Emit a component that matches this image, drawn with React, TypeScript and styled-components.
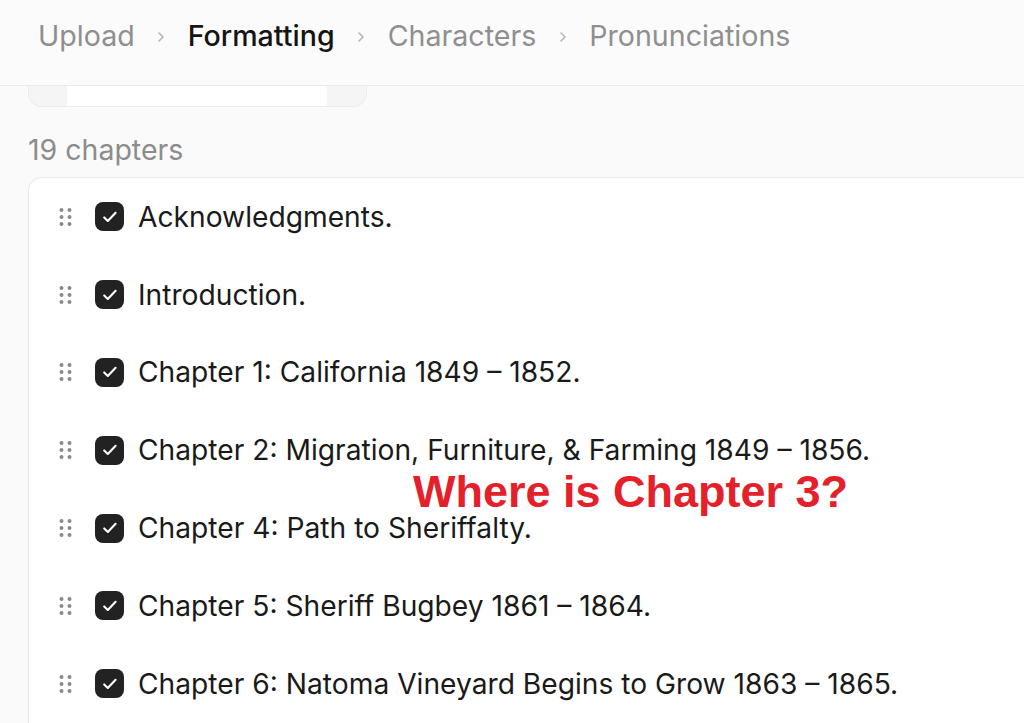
import React from "react";
import styled, { createGlobalStyle } from "styled-components";

const Global = createGlobalStyle`
  html, body { margin: 0; padding: 0; background: #fafafa; }
  body { font-family: Inter, "Noto Sans", sans-serif; color: #1c1c1c; overflow: hidden; }
  * { box-sizing: border-box; }
`;

const Page = styled.div`
  position: relative;
  width: 1024px;
  height: 723px;
  overflow: hidden;
  background: #fafafa;
`;

const Header = styled.header`
  height: 86px;
  display: flex;
  align-items: center;
  gap: 21.5px;
  padding: 0 0 12px 38px;
  border-bottom: 1px solid #ebebeb;
  background: #fbfbfb;
`;

const Crumb = styled.span<{ $active?: boolean }>`
  font-size: 28.6px;
  font-weight: ${(p) => (p.$active ? 500 : 400)};
  color: ${(p) => (p.$active ? "#141414" : "#8f8f8f")};
  line-height: 1;
`;

const Chevron = styled.svg`
  width: 10px;
  height: 14px;
  flex: none;
`;

const Content = styled.main`
  padding: 0 0 0 28px;
`;

const ScrolledBox = styled.div`
  width: 339px;
  height: 21px;
  display: grid;
  grid-template-columns: 38px 1fr 39px;
  border: 1px solid #ececec;
  border-top: none;
  border-radius: 0 0 14px 14px;
  overflow: hidden;
  background: #f5f5f5;
`;

const ScrolledCenter = styled.div`
  grid-column: 2;
  background: #ffffff;
`;

const Count = styled.div`
  margin-top: 27px;
  font-size: 28.5px;
  color: #8c8c8c;
  line-height: 32px;
`;

const Card = styled.section`
  margin-top: 11px;
  background: #ffffff;
  border: 1px solid #e9e9e9;
  border-right: none;
  border-radius: 14px 0 0 0;
  min-height: 600px;
`;

const Row = styled.div`
  height: 77.8px;
  display: flex;
  align-items: center;
  padding-left: 29px;
`;

const Handle = styled.svg`
  width: 16px;
  height: 22px;
  flex: none;
`;

const Check = styled.span`
  width: 29px;
  height: 29px;
  margin-left: 21px;
  border-radius: 8px;
  background: #222222;
  display: flex;
  align-items: center;
  justify-content: center;
  flex: none;
`;

const Title = styled.span`
  margin-left: 14px;
  font-size: 28.2px;
  color: #1a1a1a;
  white-space: nowrap;
  line-height: 1;
`;

const Note = styled.div`
  position: absolute;
  left: 413px;
  top: 469px;
  font-family: "Liberation Sans", Arial, sans-serif;
  font-weight: 700;
  font-size: 45px;
  color: #e4202a;
  white-space: nowrap;
  line-height: 1;
`;

const chapters = [
  "Acknowledgments.",
  "Introduction.",
  "Chapter 1: California 1849 – 1852.",
  "Chapter 2: Migration, Furniture, & Farming 1849 – 1856.",
  "Chapter 4: Path to Sheriffalty.",
  "Chapter 5: Sheriff Bugbey 1861 – 1864.",
  "Chapter 6: Natoma Vineyard Begins to Grow 1863 – 1865.",
];

const ChevronIcon = () => (
  <Chevron viewBox="0 0 10 14">
    <path d="M3 3l4 4-4 4" fill="none" stroke="#b5b5b5" strokeWidth="1.6" strokeLinecap="round" strokeLinejoin="round" />
  </Chevron>
);

const GripIcon = () => (
  <Handle viewBox="0 0 16 22">
    {[4, 11, 18].map((y) =>
      [3.5, 11.5].map((x) => <circle key={`${x}-${y}`} cx={x} cy={y} r="2" fill="#8a8a8a" />)
    )}
  </Handle>
);

export default function App() {
  const steps = ["Upload", "Formatting", "Characters", "Pronunciations"];
  return (
    <Page>
      <Global />
      <Header>
        {steps.map((s, i) => (
          <React.Fragment key={s}>
            {i > 0 && <ChevronIcon />}
            <Crumb $active={s === "Formatting"}>{s}</Crumb>
          </React.Fragment>
        ))}
      </Header>
      <Content>
        <ScrolledBox>
          <ScrolledCenter />
        </ScrolledBox>
        <Count>19 chapters</Count>
        <Card>
          {chapters.map((c) => (
            <Row key={c}>
              <GripIcon />
              <Check>
                <svg width="20" height="20" viewBox="0 0 20 20">
                  <path d="M4.2 10.4l3.6 3.6L15.6 5.8" fill="none" stroke="#fff" strokeWidth="2.1" strokeLinecap="round" strokeLinejoin="round" />
                </svg>
              </Check>
              <Title>{c}</Title>
            </Row>
          ))}
        </Card>
      </Content>
      <Note>Where is Chapter 3?</Note>
    </Page>
  );
}
